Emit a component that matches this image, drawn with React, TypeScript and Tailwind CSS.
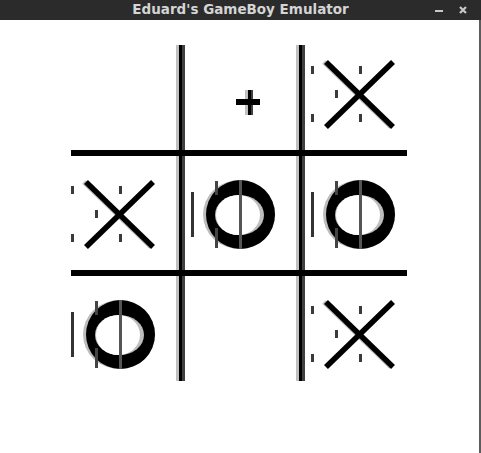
import React from 'react';

// tic-tac-toe screen as drawn by the emulator (screen coordinates)
const xs = [
  { x: 323, y: 60 },
  { x: 83, y: 180 },
  { x: 323, y: 300 },
];
const os = [
  { x: 203, y: 180 },
  { x: 323, y: 180 },
  { x: 83, y: 300 },
];

const XMark: React.FC<{ x: number; y: number }> = ({ x, y }) => (
  <g>
    {[
      [-12, 6],
      [-12, 54],
      [12, 30],
      [36, 6],
      [36, 54],
    ].map(([dx, dy], i) => (
      <rect key={i} x={x + dx} y={y + dy} width={3} height={8} fill="#3a3a3a" />
    ))}
    <line x1={x + 1} y1={y + 2} x2={x + 68} y2={y + 67} stroke="#bdbdbd" strokeWidth={5} />
    <line x1={x + 70} y1={y + 2} x2={x + 3} y2={y + 67} stroke="#bdbdbd" strokeWidth={5} />
    <line x1={x + 3} y1={y + 2} x2={x + 70} y2={y + 67} stroke="#000" strokeWidth={5.5} />
    <line x1={x + 70} y1={y + 2} x2={x + 3} y2={y + 67} stroke="#000" strokeWidth={5.5} />
  </g>
);

const OMark: React.FC<{ x: number; y: number }> = ({ x, y }) => (
  <g>
    <rect x={x - 12} y={y + 12} width={3} height={45} fill="#333" />
    <ellipse cx={x + 36} cy={y + 34.5} rx={36} ry={34.5} fill="#bdbdbd" />
    <ellipse cx={x + 37.5} cy={y + 34.5} rx={34.5} ry={34.5} fill="#000" />
    <ellipse cx={x + 36.5} cy={y + 35} rx={24.5} ry={20} fill="#bdbdbd" />
    <ellipse cx={x + 35} cy={y + 35} rx={22} ry={20} fill="#fff" />
    <rect x={x + 36} y={y} width={3} height={69} fill="#555" />
    <rect x={x + 12} y={y + 1} width={3} height={14} fill="#444" />
    <rect x={x + 12} y={y + 48} width={3} height={20} fill="#444" />
  </g>
);

const VLine: React.FC<{ x: number }> = ({ x }) => (
  <g shapeRendering="crispEdges">
    <rect x={x} y={45} width={3} height={336} fill="#c0c0c0" />
    <rect x={x + 3} y={45} width={3} height={336} fill="#000" />
    <rect x={x + 6} y={45} width={3} height={336} fill="#404040" />
  </g>
);

export default function App() {
  return (
    <div className="w-[481px] h-[453px] flex flex-col bg-white overflow-hidden">
      <div className="relative h-[20px] bg-[#2b2b2b] flex items-center justify-center shrink-0">
        <span className="text-[#d4d4d4] text-[13.5px] font-bold leading-none font-['DejaVu_Sans',sans-serif]">
          Eduard's GameBoy Emulator
        </span>
        <div className="absolute right-[14px] top-0 h-full flex items-center gap-[16px]">
          <svg width="8" height="8" viewBox="0 0 8 8">
            <rect x="0" y="4" width="8" height="2" fill="#c8c8c8" />
          </svg>
          <svg width="8" height="8" viewBox="0 0 8 8">
            <path d="M1 1 L7 7 M7 1 L1 7" stroke="#c8c8c8" strokeWidth="2.2" />
          </svg>
        </div>
      </div>
      <div className="flex flex-1">
        <div className="flex-1 bg-white">
          <svg width="479" height="433" viewBox="0 20 479 433">
            <VLine x={176} />
            <VLine x={296} />
            <rect x={71} y={150} width={336} height={6} fill="#000" shapeRendering="crispEdges" />
            <rect x={71} y={270} width={336} height={6} fill="#000" shapeRendering="crispEdges" />
            <g shapeRendering="crispEdges">
              <rect x={245} y={90} width={3} height={25} fill="#c0c0c0" />
              <rect x={248} y={90} width={3} height={25} fill="#000" />
              <rect x={251} y={90} width={2} height={25} fill="#404040" />
              <rect x={236} y={99} width={24} height={6} fill="#000" />
            </g>
            {xs.map((p, i) => (
              <XMark key={i} x={p.x} y={p.y} />
            ))}
            {os.map((p, i) => (
              <OMark key={i} x={p.x} y={p.y} />
            ))}
          </svg>
        </div>
        <div className="w-[2px] bg-[#5c5c5c]" />
      </div>
    </div>
  );
}
